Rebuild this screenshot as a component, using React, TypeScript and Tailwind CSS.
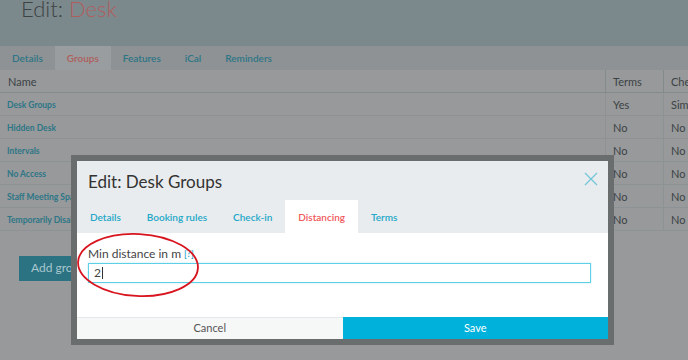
import React from 'react';

const rows = [
  { name: 'Desk Groups', terms: 'Yes', check: 'Simple' },
  { name: 'Hidden Desk', terms: 'No', check: 'No' },
  { name: 'Intervals', terms: 'No', check: 'No' },
  { name: 'No Access', terms: 'No', check: 'No' },
  { name: 'Staff Meeting Space', terms: 'No', check: 'No' },
  { name: 'Temporarily Disabled', terms: 'No', check: 'No' },
];

const pageTabs = ['Details', 'Groups', 'Features', 'iCal', 'Reminders'];
const modalTabs = ['Details', 'Booking rules', 'Check-in', 'Distancing', 'Terms'];

const font = { fontFamily: 'Lato, "Open Sans", sans-serif' };

export default function App() {
  return (
    <div
      className="relative w-[688px] h-[360px] overflow-hidden bg-[#97999b] text-[#3c4244]"
      style={font}
    >
      {/* page header */}
      <div className="h-[46px] bg-[#7c898c] pl-[21px]">
        <h1 className="text-[22px] font-light leading-none -translate-y-[2px] text-[#3d4345]">
          Edit: <span className="text-[#b05d5d]">Desk</span>
        </h1>
      </div>

      {/* page tabs */}
      <div className="flex h-[24px] bg-[#8e9294] text-[10px] font-semibold">
        {pageTabs.map((t) => (
          <div
            key={t}
            className={`flex items-center px-[12px] ${
              t === 'Groups' ? 'bg-[#999d9f] text-[#b05d5d]' : 'text-[#2d7686]'
            }`}
          >
            {t}
          </div>
        ))}
      </div>

      {/* table */}
      <div className="grid grid-cols-[605px_58px_1fr] text-[11px]">
        <div className="h-[23px] flex items-center pl-[8px] pt-[2px] border-b border-[#828a8c]">Name</div>
        <div className="h-[23px] flex items-center pl-[7px] pt-[2px] border-b border-l border-[#828a8c]">Terms</div>
        <div className="h-[23px] flex items-center pl-[7px] pt-[2px] border-b border-l border-[#828a8c] whitespace-nowrap">Check-in</div>
        {rows.map((r) => (
          <React.Fragment key={r.name}>
            <div className="h-[23px] flex items-center pl-[7px] pt-[2px] border-b border-[#8d9294] text-[8.5px] font-bold text-[#2d7686]">
              {r.name}
            </div>
            <div className="h-[23px] flex items-center pl-[7px] pt-[2px] border-b border-l border-[#8d9294]">{r.terms}</div>
            <div className="h-[23px] flex items-center pl-[7px] pt-[2px] border-b border-l border-[#8d9294] whitespace-nowrap">{r.check}</div>
          </React.Fragment>
        ))}
      </div>

      <div className="pl-[19px] pt-[23px]">
        <div className="inline-flex items-center h-[25px] px-[12px] bg-[#2b7282] text-[12px] text-[#a9c7ce]">Add group</div>
      </div>

      {/* modal */}
      <div className="absolute left-[71px] top-[155px] w-[543px] border-[6px] border-[#6a6d6e] bg-white">
        <div className="bg-[#e9ecee]">
          <div className="flex items-start justify-between h-[39px] pl-[11px] pr-[10px] pt-[12px]">
            <h2 className="text-[17px] leading-none text-[#333]">Edit: Desk Groups</h2>
            <svg width="14" height="14" viewBox="0 0 14 14" className="-mt-[1px]">
              <path d="M1 1L13 13M13 1L1 13" stroke="#6fc4d6" strokeWidth="1.2" />
            </svg>
          </div>
          <div className="flex h-[33px] text-[10px] font-semibold">
            {modalTabs.map((t) => (
              <div
                key={t}
                className={`flex items-center px-[13px] pt-[1px] ${
                  t === 'Distancing' ? 'bg-white text-[#f0575c]' : 'text-[#22a8c8]'
                }`}
              >
                {t}
              </div>
            ))}
          </div>
        </div>

        <div className="h-[84px] px-[11px] pt-[13px]">
          <label className="flex items-center gap-[3px] text-[12px] leading-[15px] text-[#444]">
            Min distance in m <span className="text-[9px] font-semibold text-[#1fa7c9]">[?]</span>
          </label>
          <div className="mt-[2px] h-[20px] w-[503px] flex items-center pl-[5px] border border-[#5dd0e7] shadow-[0_0_2px_#bfeaf3] text-[12px] text-[#444]">
            2<span className="ml-[1px] w-px h-[12px] bg-[#333]" />
          </div>
        </div>

        <div className="flex h-[22px] text-[11px]">
          <div className="flex-1 flex items-center justify-center bg-[#f6f7f7] border-t border-[#e3e8ea] text-[#555]">Cancel</div>
          <div className="flex-1 flex items-center justify-center bg-[#00b2db] text-white">Save</div>
        </div>
      </div>

      {/* red annotation */}
      <svg className="absolute left-0 top-0 pointer-events-none" width="688" height="360">
        <ellipse cx="138" cy="265" rx="60" ry="31" fill="none" stroke="#d8141e" strokeWidth="1.8" transform="rotate(3 138 265)" />
      </svg>
    </div>
  );
}
